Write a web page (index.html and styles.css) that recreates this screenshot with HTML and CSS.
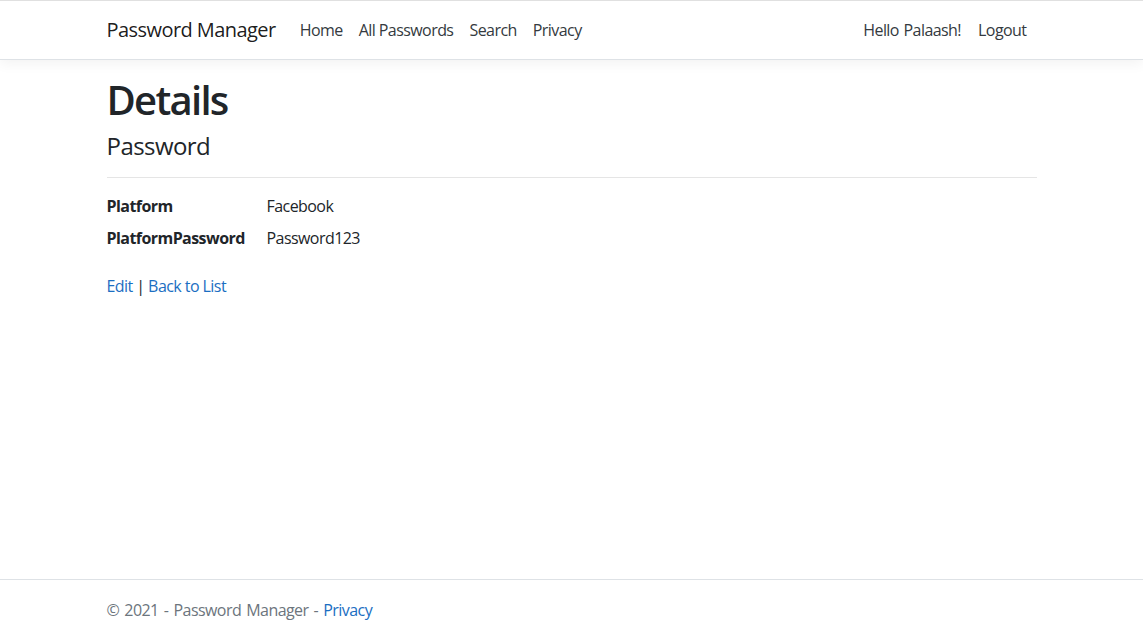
FILE: index.html
```html
<!DOCTYPE html>
<html lang="en">
<head>
<meta charset="utf-8">
<title>Details - Password Manager</title>
<link rel="stylesheet" href="styles.css">
</head>
<body>
<header class="site-header">
  <nav class="navbar">
    <div class="container nav-inner">
      <a class="brand" href="#">Password Manager</a>
      <ul class="nav-list nav-main">
        <li><a class="nav-link" href="#">Home</a></li>
        <li><a class="nav-link" href="#">All Passwords</a></li>
        <li><a class="nav-link" href="#">Search</a></li>
        <li><a class="nav-link" href="#">Privacy</a></li>
      </ul>
      <ul class="nav-list nav-user">
        <li><a class="nav-link" href="#">Hello Palaash!</a></li>
        <li><button class="nav-link nav-button" type="button">Logout</button></li>
      </ul>
    </div>
  </nav>
</header>
<main class="container main">
  <h1 class="title">Details</h1>
  <div>
    <h4 class="subtitle">Password</h4>
    <hr class="rule">
    <dl class="details">
      <dt>Platform</dt>
      <dd>Facebook</dd>
      <dt>PlatformPassword</dt>
      <dd>Password123</dd>
    </dl>
  </div>
  <div class="actions">
    <a href="#">Edit</a> | <a href="#">Back to List</a>
  </div>
</main>
<footer class="footer">
  <div class="container">
    &copy; 2021 - Password Manager - <a href="#">Privacy</a>
  </div>
</footer>
</body>
</html>
```
FILE: styles.css
```css
* { box-sizing: border-box; }
html, body { margin: 0; padding: 0; }
body {
  font-family: "Open Sans", "Noto Sans", sans-serif;
  font-size: 16px;
  line-height: 1.5;
  letter-spacing: -0.035em;
  color: #212529;
  background: #fff;
  min-height: 100vh;
  display: flex;
  flex-direction: column;
}
a { color: #1b6ec2; text-decoration: none; }
.container {
  width: 960px;
  margin: 0 auto;
  padding: 0 15px;
}
.site-header { flex: none; }
.navbar {
  border-top: 1px solid #e0e0e0;
  border-bottom: 1px solid #dee2e6;
  box-shadow: 0 4px 12px rgba(0,0,0,0.05);
  padding: 8px 0;
  height: 60px;
}
.nav-inner {
  display: flex;
  align-items: center;
  height: 100%;
}
.brand {
  color: rgba(0,0,0,0.9);
  font-size: 20px;
  margin-right: 16px;
  white-space: nowrap;
}
.nav-list {
  list-style: none;
  margin: 0;
  padding: 0;
  display: flex;
}
.nav-main { flex: 1; }
.nav-link {
  display: block;
  padding: 8px;
  color: #343a40;
  font-size: 16px;
  white-space: nowrap;
}
.nav-user .nav-link { word-spacing: 1px; }
.nav-button {
  background: none;
  border: 0;
  font-family: inherit;
  letter-spacing: inherit;
  line-height: 1.5;
  padding: 8px 10px 8px 9px;
  cursor: pointer;
}
.main { flex: 1; padding-top: 16px; }
.title {
  font-size: 40px;
  font-weight: 600;
  line-height: 1.2;
  letter-spacing: -0.043em;
  margin: 0 0 8px;
}
.subtitle {
  font-size: 24px;
  font-weight: 500;
  line-height: 1.2;
  margin: 0 0 8px;
}
.rule {
  border: 0;
  border-top: 1px solid rgba(0,0,0,0.1);
  margin: 16px 0;
}
.details {
  display: grid;
  grid-template-columns: 160px 1fr;
  row-gap: 8px;
  margin: 0 0 16px;
}
.details dt { font-weight: 700; margin: 0; }
.details dd { margin: 0; }
.actions { margin-top: 24px; }
.footer {
  flex: none;
  border-top: 1px solid #dee2e6;
  color: #6c757d;
  line-height: 60px;
  height: 61px;
  white-space: nowrap;
  word-spacing: 1.5px;
}
```
